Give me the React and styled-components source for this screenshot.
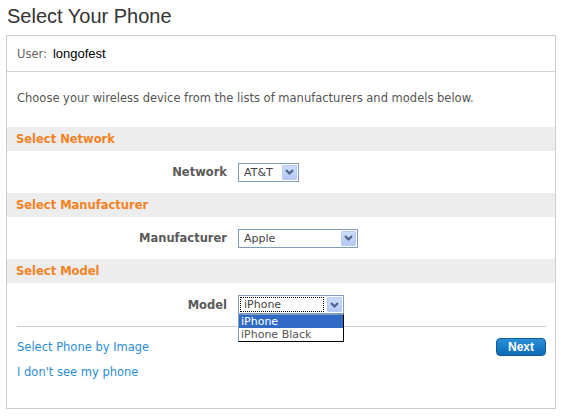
import React from "react";
import styled, { createGlobalStyle } from "styled-components";

const GlobalStyle = createGlobalStyle`
  body {
    margin: 0;
    background: #fff;
    font-family: "DejaVu Sans", Verdana, sans-serif;
  }
`;

function Chevron() {
  return (
    <svg width="9" height="6" viewBox="0 0 9 6">
      <path d="M1 1 L4.5 4.5 L8 1" fill="none" stroke="#4d6185" strokeWidth="2" />
    </svg>
  );
}

function FakeSelect({ value, width, focused, children }) {
  return (
    <SelectBox width={width}>
      <SelectValue focused={focused}>{value}</SelectValue>
      <ArrowBox>
        <Chevron />
      </ArrowBox>
      {children}
    </SelectBox>
  );
}

function App() {
  return (
    <Page>
      <GlobalStyle />
      <Title>Select Your Phone</Title>
      <Panel>
        <UserRow>
          <UserLabel>User:</UserLabel>
          <UserName>longofest</UserName>
        </UserRow>
        <Intro>
          Choose your wireless device from the lists of manufacturers and models below.
        </Intro>

        <SectionHeader>Select Network</SectionHeader>
        <FieldRow>
          <FieldLabel>Network</FieldLabel>
          <FakeSelect value="AT&T" width={61} />
        </FieldRow>

        <SectionHeader>Select Manufacturer</SectionHeader>
        <FieldRow>
          <FieldLabel>Manufacturer</FieldLabel>
          <FakeSelect value="Apple" width={120} />
        </FieldRow>

        <SectionHeader>Select Model</SectionHeader>
        <FieldRow last>
          <FieldLabel>Model</FieldLabel>
          <FakeSelect value="iPhone" width={106} focused>
            <DropList>
              <DropItem selected>iPhone</DropItem>
              <DropItem>iPhone Black</DropItem>
            </DropList>
          </FakeSelect>
        </FieldRow>

        <Footer>
          <Links>
            <TextLink href="#">Select Phone by Image</TextLink>
            <TextLink href="#">I don't see my phone</TextLink>
          </Links>
          <NextButton>Next</NextButton>
        </Footer>
      </Panel>
    </Page>
  );
}

export default App;

const Page = styled.div`
  padding: 0 5px 0 6px;
  width: 550px;
`;

const Title = styled.h1`
  margin: 4px 0 7px 1px;
  font-family: Arial, "Liberation Sans", sans-serif;
  font-weight: normal;
  font-size: 20px;
  line-height: 24px;
  color: #333;
`;

const Panel = styled.div`
  border: 1px solid #cccccc;
`;

const UserRow = styled.div`
  display: flex;
  align-items: center;
  height: 35px;
  padding: 0 10px;
  border-bottom: 1px solid #d4d4d4;
`;

const UserLabel = styled.span`
  font-size: 11.5px;
  color: #666;
  margin-right: 6px;
`;

const UserName = styled.span`
  font-family: Arial, "Liberation Sans", sans-serif;
  font-size: 13px;
  color: #000;
`;

const Intro = styled.p`
  margin: 0;
  padding: 19px 10px 22px;
  font-size: 11.5px;
  line-height: 14px;
  color: #555;
`;

const SectionHeader = styled.div`
  height: 24px;
  line-height: 25px;
  padding: 0 9px;
  background: #ededed;
  color: #f5821f;
  font-size: 11.5px;
  font-weight: bold;
`;

const FieldRow = styled.div`
  display: grid;
  grid-template-columns: 220px 1fr;
  column-gap: 11px;
  align-items: center;
  height: ${(p) => (p.last ? "43px" : "42px")};
`;

const FieldLabel = styled.div`
  text-align: right;
  font-size: 11.5px;
  font-weight: bold;
  color: #5a5a5a;
`;

const SelectBox = styled.div`
  position: relative;
  display: flex;
  align-items: center;
  box-sizing: border-box;
  width: ${(p) => p.width}px;
  height: 19px;
  border: 1px solid #7f9db9;
  background: #fff;
  padding: 1px;
`;

const SelectValue = styled.div`
  flex: 1;
  box-sizing: border-box;
  height: 15px;
  line-height: 13px;
  padding-left: 3px;
  font-family: Tahoma, "DejaVu Sans", sans-serif;
  font-size: 11px;
  color: #444;
  border: 1px ${(p) => (p.focused ? "dotted #000" : "solid transparent")};
  margin-right: 3px;
`;

const ArrowBox = styled.div`
  display: flex;
  align-items: center;
  justify-content: center;
  box-sizing: border-box;
  width: 15px;
  height: 15px;
  border: 1px solid #b9cbf3;
  border-radius: 1px;
  background: linear-gradient(#cddcfc, #b5c9f7);
`;

const DropList = styled.div`
  position: absolute;
  top: 18px;
  left: -1px;
  width: 104px;
  border: 1px solid #7f9db9;
  border-right-color: #000;
  border-bottom-color: #000;
  background: #fff;
  z-index: 2;
`;

const DropItem = styled.div`
  height: 13px;
  line-height: 13px;
  padding-left: 2px;
  font-family: Tahoma, "DejaVu Sans", sans-serif;
  font-size: 11px;
  background: ${(p) => (p.selected ? "#316ac5" : "#fff")};
  color: ${(p) => (p.selected ? "#fff" : "#555")};
`;

const Footer = styled.div`
  display: flex;
  justify-content: space-between;
  align-items: flex-start;
  margin: 0 9px 0 10px;
  padding: 13px 0 29px;
  border-top: 1px solid #cccccc;
`;

const Links = styled.div`
  display: flex;
  flex-direction: column;
  gap: 11px;
`;

const TextLink = styled.a`
  font-size: 11.5px;
  line-height: 14px;
  color: #2b8ed6;
  text-decoration: none;
`;

const NextButton = styled.button`
  width: 50px;
  height: 18px;
  margin-top: -2px;
  padding: 0;
  border: 1px solid #0a5c9c;
  border-radius: 4px;
  background: linear-gradient(#2a8fd8, #0c6cb6);
  color: #fff;
  font-family: Arial, "Liberation Sans", sans-serif;
  font-size: 12px;
  font-weight: bold;
  cursor: pointer;
`;
